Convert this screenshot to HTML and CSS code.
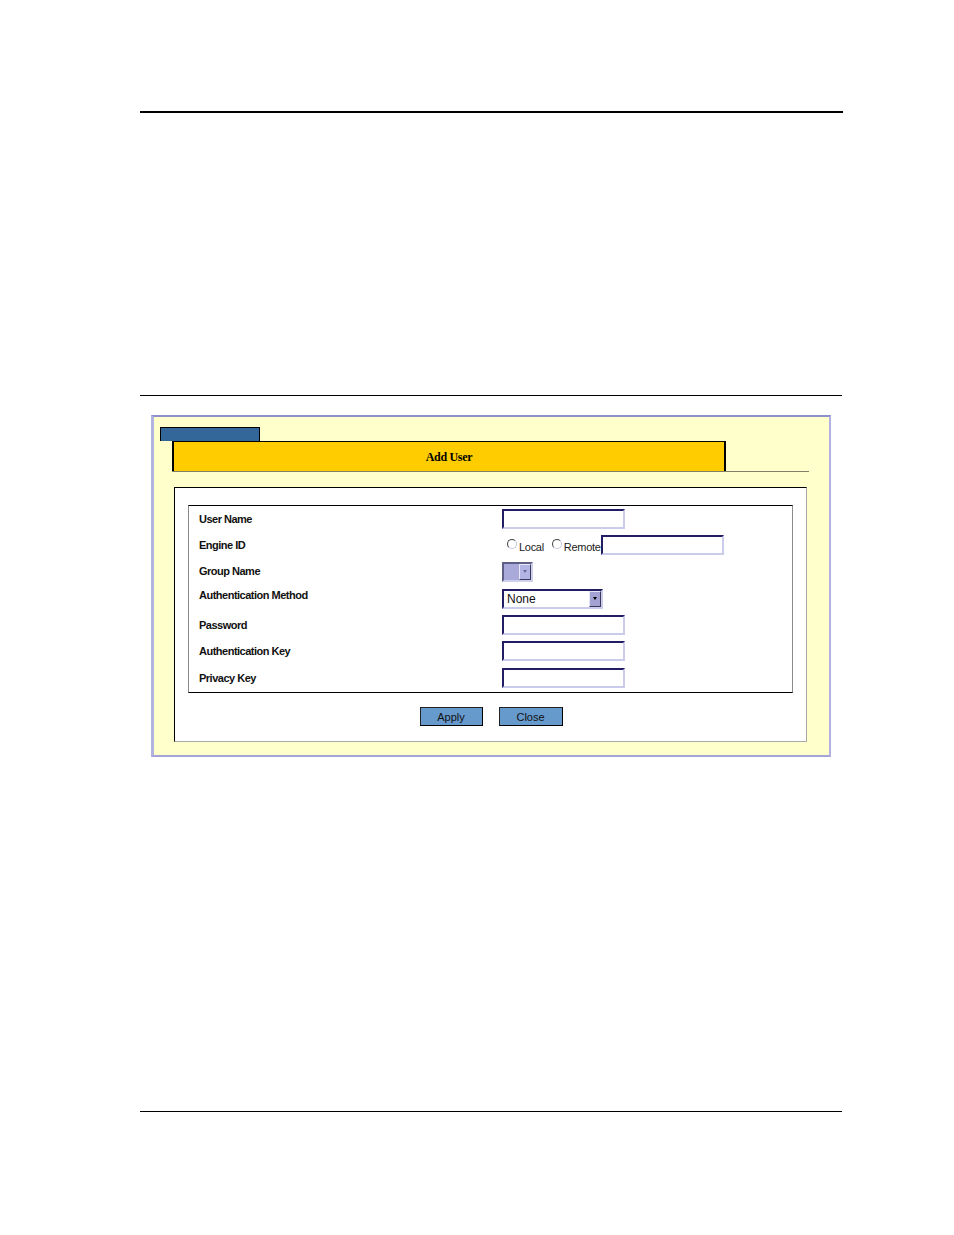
FILE: index.html
```html
<!DOCTYPE html>
<html>
<head>
<meta charset="utf-8">
<link rel="stylesheet" href="styles.css">
</head>
<body>
<div class="page">
  <div class="rule-top"></div>
  <div class="rule-mid"></div>
  <div class="panel">
    <div class="tab"></div>
    <div class="header-row">
      <div class="header">Add User</div>
    </div>
    <div class="form-box">
      <div class="table">
        <div class="row">
          <div class="label">User Name</div>
          <div class="field"><input class="text" type="text"></div>
        </div>
        <div class="row">
          <div class="label">Engine ID</div>
          <div class="field">
            <span class="radio"></span><span class="opt">Local</span>
            <span class="radio r2"></span><span class="opt">Remote</span><input class="text" type="text">
          </div>
        </div>
        <div class="row">
          <div class="label">Group Name</div>
          <div class="field">
            <div class="sel-small"><span class="arrow-btn light"><span class="tri grey"></span></span></div>
          </div>
        </div>
        <div class="row">
          <div class="label lab-up">Authentication Method</div>
          <div class="field">
            <div class="sel"><span class="sel-val">None</span><span class="arrow-btn"><span class="tri"></span></span></div>
          </div>
        </div>
        <div class="row">
          <div class="label">Password</div>
          <div class="field"><input class="text" type="text"></div>
        </div>
        <div class="row">
          <div class="label">Authentication Key</div>
          <div class="field"><input class="text" type="text"></div>
        </div>
        <div class="row">
          <div class="label">Privacy Key</div>
          <div class="field"><input class="text" type="text"></div>
        </div>
      </div>
      <div class="buttons">
        <button class="btn" type="button">Apply</button>
        <button class="btn btn-close" type="button">Close</button>
      </div>
    </div>
  </div>
  <div class="rule-bottom"></div>
</div>
</body>
</html>
```

FILE: styles.css
```css
html, body {
  margin: 0;
  padding: 0;
  background: #ffffff;
}
body {
  font-family: "Liberation Sans", Arial, sans-serif;
  color: #000;
}
.page {
  width: 703px;
  margin-left: 140px;
  padding-top: 111px;
  padding-bottom: 120px;
}
.rule-top {
  height: 2px;
  background: #000;
}
.rule-mid {
  margin-top: 282px;
  height: 1px;
  width: 702px;
  background: #000;
}
.panel {
  box-sizing: border-box;
  margin-top: 19px;
  margin-left: 11px;
  width: 680px;
  height: 342px;
  background: #ffffcc;
  border-top: 2px solid #8f8fcb;
  border-left: 3px solid #b3b3e2;
  border-right: 2px solid #b3b3e2;
  border-bottom: 2px solid #a4a4d8;
}
.tab {
  box-sizing: border-box;
  margin-top: 10px;
  margin-left: 6px;
  width: 100px;
  height: 14px;
  background: #336699;
  border: 1px solid #000;
  border-bottom: none;
}
.header-row {
  margin-left: 18px;
  width: 637px;
  border-bottom: 1px solid #7f7f6a;
}
.header {
  box-sizing: border-box;
  width: 554px;
  height: 30px;
  background: #ffcc00;
  border-top: 1px solid #000;
  border-left: 2px solid #000;
  border-right: 2px solid #000;
  font-family: "Liberation Serif", "Times New Roman", serif;
  font-weight: bold;
  font-size: 12px;
  letter-spacing: -0.3px;
  display: flex;
  align-items: center;
  justify-content: center;
  padding-top: 1px;
}
.form-box {
  box-sizing: border-box;
  margin-top: 15px;
  margin-left: 20px;
  width: 633px;
  height: 255px;
  background: #fff;
  border-top: 1px solid #000;
  border-left: 1px solid #000;
  border-right: 1px solid #a8a8a8;
  border-bottom: 1px solid #a8a8a8;
  padding-top: 17px;
  padding-left: 13px;
}
.table {
  box-sizing: border-box;
  width: 605px;
  height: 188px;
  border-top: 1px solid #000;
  border-bottom: 1px solid #000;
  border-left: 1px solid #8a8a8a;
  border-right: 1px solid #8a8a8a;
  display: grid;
  grid-template-rows: 26px 26px 26px 27px 27px 26px 27px;
}
.row {
  display: grid;
  grid-template-columns: 313px 1fr;
  align-items: center;
}
.label {
  padding-left: 10px;
  font-size: 11px;
  font-weight: bold;
  letter-spacing: -0.5px;
  color: #111;
}
.lab-up {
  margin-top: -5px;
}
.field {
  display: flex;
  align-items: center;
}
.text {
  box-sizing: border-box;
  width: 123px;
  height: 20px;
  margin: 0;
  padding: 0;
  background: #fff;
  border-style: solid;
  border-width: 2px;
  border-top-color: #231d63;
  border-left-color: #231d63;
  border-right-color: #cbcbeb;
  border-bottom-color: #cbcbeb;
  outline: none;
}
.radio {
  box-sizing: border-box;
  width: 10px;
  height: 10px;
  border-radius: 50%;
  border: 1px solid #444;
  border-right-color: #c8c8e0;
  border-bottom-color: #c8c8e0;
  background: #fff;
  margin-left: 5px;
  margin-top: -3px;
}
.r2 {
  margin-left: 8px;
}
.opt {
  font-size: 11px;
  margin-left: 2px;
  margin-top: 3px;
  letter-spacing: -0.3px;
  color: #222;
}
.sel-small {
  box-sizing: border-box;
  width: 31px;
  height: 20px;
  margin-top: 1px;
  background: #a9a9da;
  border-style: solid;
  border-width: 2px;
  border-top-color: #5f5f86;
  border-left-color: #5f5f86;
  border-right-color: #cfcfee;
  border-bottom-color: #cfcfee;
  display: flex;
  justify-content: flex-end;
  align-items: stretch;
}
.sel {
  box-sizing: border-box;
  width: 101px;
  height: 20px;
  margin-top: 2px;
  background: #fff;
  border-style: solid;
  border-width: 2px;
  border-top-color: #231d63;
  border-left-color: #231d63;
  border-right-color: #cbcbeb;
  border-bottom-color: #cbcbeb;
  display: flex;
  align-items: stretch;
}
.sel-val {
  flex: 1;
  font-size: 12px;
  padding-left: 3px;
  line-height: 16px;
  color: #111;
}
.arrow-btn {
  box-sizing: border-box;
  width: 12px;
  background: #a3a3d3;
  border-style: solid;
  border-width: 1px;
  border-top-color: #e6e6f6;
  border-left-color: #e6e6f6;
  border-right-color: #3a3a5a;
  border-bottom-color: #3a3a5a;
  display: flex;
  align-items: center;
  justify-content: center;
}
.arrow-btn.light {
  background: #b4b4e4;
}
.tri {
  width: 0;
  height: 0;
  border-left: 2px solid transparent;
  border-right: 2px solid transparent;
  border-top: 3px solid #000;
}
.tri.grey {
  border-top-color: #6a6a9a;
}
.buttons {
  display: flex;
  justify-content: center;
  gap: 16px;
  margin-top: 14px;
  padding-right: 12px;
}
.btn {
  box-sizing: border-box;
  width: 63px;
  height: 19px;
  margin: 0;
  padding: 0;
  background: #6699cc;
  border: 1px solid #000;
  border-top-color: #222;
  border-left-color: #222;
  font-family: "Liberation Sans", Arial, sans-serif;
  font-size: 11px;
  color: #111;
}
.btn-close {
  width: 64px;
}
.rule-bottom {
  margin-top: 354px;
  height: 1px;
  width: 702px;
  background: #000;
}
```
